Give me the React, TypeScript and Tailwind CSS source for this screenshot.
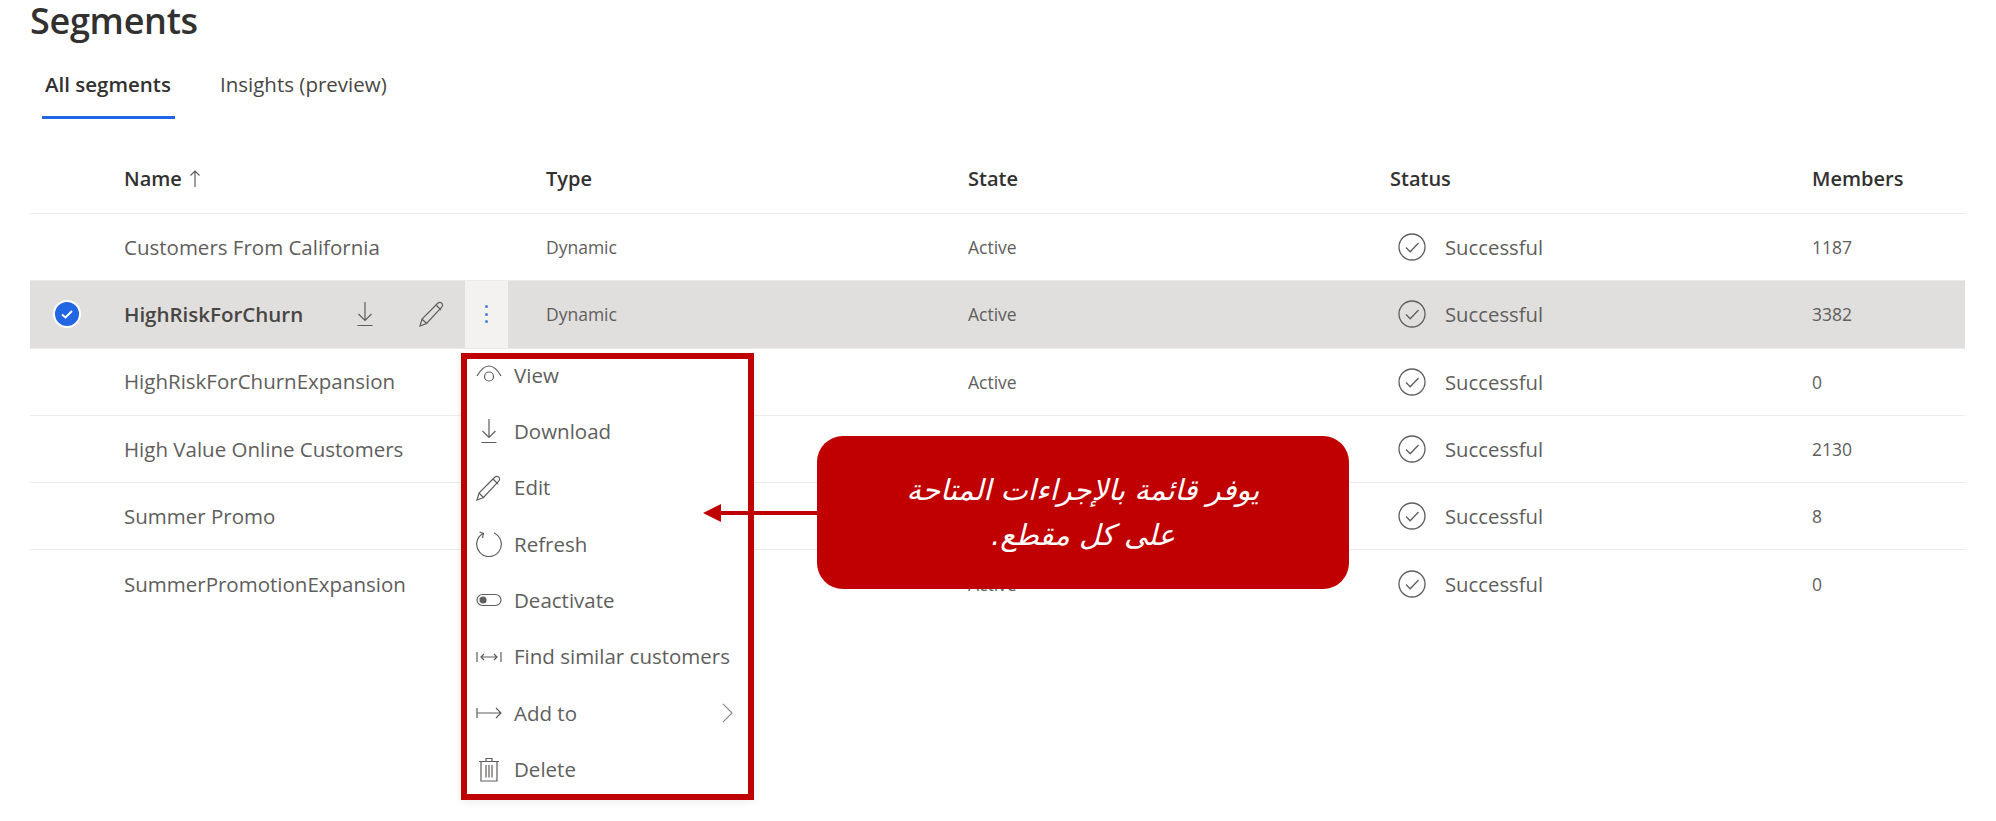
import { ReactNode } from 'react';

// type/state left empty where the menu and the callout sit on top of the cell
const rows = [
  { name: 'Customers From California', type: 'Dynamic', state: 'Active', members: '1187' },
  { name: 'HighRiskForChurn', type: 'Dynamic', state: 'Active', members: '3382', selected: true },
  { name: 'HighRiskForChurnExpansion', type: '', state: 'Active', members: '0' },
  { name: 'High Value Online Customers', type: '', state: '', members: '2130' },
  { name: 'Summer Promo', type: '', state: '', members: '8' },
  { name: 'SummerPromotionExpansion', type: '', state: 'Active', members: '0' },
];

function Icon({ children, className = 'w-[26px] h-[26px]' }: { children: ReactNode; className?: string }) {
  return (
    <svg viewBox="0 0 26 26" fill="none" stroke="#605e5c" strokeWidth="1.2" className={className}>
      {children}
    </svg>
  );
}

const DownloadIcon = () => (
  <Icon>
    <path d="M13 1v18M6.500 13l6.500 6.500 6.500-6.500M5.500 24.500h15" />
  </Icon>
);

const PencilIcon = () => (
  <Icon>
    <path d="M1 25l2-7L18.500 2.500c1.500-1.500 3-1.500 4.200-.3s1.200 2.800-.2 4.200L7.500 22.500zM3 18l5 5M17 4l5 5" />
  </Icon>
);

const CircleCheck = () => (
  <svg viewBox="0 0 28 28" fill="none" stroke="#605e5c" strokeWidth="1.3" className="h-[28px] w-[28px]">
    <circle cx="14" cy="14" r="13" />
    <path d="M8 14.500l4.200 4.200L20.500 10" />
  </svg>
);

const menuItems: { label: string; icon: ReactNode; chevron?: boolean }[] = [
  {
    label: 'View',
    icon: (
      <Icon>
        <path d="M1 14C5 7 9 4 13 4s8 3 12 10" />
        <circle cx="13" cy="14.500" r="4.500" />
      </Icon>
    ),
  },
  { label: 'Download', icon: <DownloadIcon /> },
  { label: 'Edit', icon: <PencilIcon /> },
  {
    label: 'Refresh',
    icon: (
      <Icon>
        <path d="M18 2A12.300 12.300 0 1 1 7 2.500M3.500 1L7.500 2.500 6.500 7" />
      </Icon>
    ),
  },
  {
    label: 'Deactivate',
    icon: (
      <Icon>
        <rect x="1" y="7.500" width="24" height="11" rx="5.500" />
        <circle cx="7" cy="13" r="3" fill="#605e5c" />
      </Icon>
    ),
  },
  {
    label: 'Find similar customers',
    icon: (
      <Icon>
        <path d="M1 8v10M25 8v10M5 13h16M8 10l-3 3 3 3M18 10l3 3-3 3" />
      </Icon>
    ),
  },
  {
    label: 'Add to',
    icon: (
      <Icon>
        <path d="M1 8v10M1 13h24M20 8l5 5-5 5" />
      </Icon>
    ),
    chevron: true,
  },
  {
    label: 'Delete',
    icon: (
      <Icon>
        <path d="M3 5.500h20M5 5.500V25h16V5.500M10 5.500V2.500h6v3M10 9v12.500M13 9v12.500M16 9v12.500" />
      </Icon>
    ),
  },
];

export default function App() {
  return (
    <div
      className="relative h-[821px] w-full overflow-hidden bg-white text-[#323130]"
      style={{ fontFamily: '"Open Sans", "Noto Sans", sans-serif' }}
    >
      <h1 className="ml-[30px] h-[42px] text-[36px] leading-[42px] font-semibold tracking-[-0.3px]">Segments</h1>

      {/* Tabs */}
      <div className="ml-[42px] flex h-[77px] items-start gap-[45px] pt-[25px] text-[20.500px] leading-[34px]">
        <div className="relative h-[52px] w-[133px] px-[3px] font-semibold whitespace-nowrap">
          All segments
          <div className="absolute right-0 bottom-0 left-0 h-[3px] bg-[#2266e3]" />
        </div>
        <div className="whitespace-nowrap text-[#484644]">Insights (preview)</div>
      </div>

      {/* Table */}
      <div className="mt-[26px] ml-[30px] w-[1935px]">
        <div className="grid h-[69px] grid-cols-[94px_422px_422px_422px_422px_153px] items-center border-b border-[#edebe9] text-[20px] font-semibold">
          <div />
          <div className="flex items-center gap-[7px]">
            Name
            <svg viewBox="0 0 12 18" fill="none" stroke="#605e5c" strokeWidth="1.200" className="h-[18px] w-[12px]">
              <path d="M6 17V1M1.500 5.500L6 1l4.500 4.500" />
            </svg>
          </div>
          <div>Type</div>
          <div>State</div>
          <div>Status</div>
          <div>Members</div>
        </div>

        {rows.map((row, i) => (
          <div
            key={row.name}
            className={`grid h-[67.300px] grid-cols-[94px_422px_422px_422px_422px_153px] items-center text-[17.500px] text-[#605e5c] ${
              i < rows.length - 1 ? 'border-b border-[#edebe9]' : ''
            } ${row.selected ? 'bg-[#e1dfdd]' : ''}`}
          >
            <div className="flex justify-start pl-[23px]">
              {row.selected && (
                <span className="flex h-[28px] w-[28px] items-center justify-center rounded-full border-2 border-white bg-[#2266e3]">
                  <svg viewBox="0 0 14 14" fill="none" stroke="white" strokeWidth="2" className="h-[14px] w-[14px]">
                    <path d="M2 7.500l3.500 3L12 4" />
                  </svg>
                </span>
              )}
            </div>
            {row.selected ? (
              <div className="flex h-full items-center">
                <span className="w-[219px] text-[20.500px] font-semibold text-[#484644]">{row.name}</span>
                <span className="flex w-[44px] justify-center"><DownloadIcon /></span>
                <span className="ml-[23px] flex w-[44px] justify-center"><PencilIcon /></span>
                <span className="ml-[11px] flex h-full w-[43px] flex-col items-center justify-center gap-[4.500px] bg-[#f3f2f1]">
                  <i className="h-[3px] w-[3px] rounded-full bg-[#4a7fd8]" />
                  <i className="h-[3px] w-[3px] rounded-full bg-[#4a7fd8]" />
                  <i className="h-[3px] w-[3px] rounded-full bg-[#4a7fd8]" />
                </span>
              </div>
            ) : (
              <div className="text-[20.500px]">{row.name}</div>
            )}
            <div>{row.type}</div>
            <div>{row.state}</div>
            <div className="flex items-center gap-[19px] pl-[8px] text-[20.300px]">
              <CircleCheck />
              Successful
            </div>
            <div>{row.members}</div>
          </div>
        ))}
      </div>

      {/* Context menu with annotation frame */}
      <div className="absolute top-[353px] left-[461px] h-[447px] w-[293px] border-[6px] border-[#c00000] bg-white shadow-[0_2px_8px_rgba(0,0,0,0.07)]">
        <div className="-mt-[12px] flex flex-col text-[20.500px] text-[#605e5c]">
          {menuItems.map((item) => (
            <div key={item.label} className="relative flex h-[56.300px] items-center gap-[12px] pl-[9px] whitespace-nowrap">
              {item.icon}
              {item.label}
              {item.chevron && (
                <svg viewBox="0 0 12 22" fill="none" stroke="#8a8886" strokeWidth="1.200" className="absolute right-[15px] h-[20px] w-[11px]">
                  <path d="M1 1l10 10L1 21" />
                </svg>
              )}
            </div>
          ))}
        </div>
      </div>

      {/* Callout and arrow */}
      <div className="absolute top-[504px] left-[703px] flex items-center">
        <svg viewBox="0 0 18 18" className="h-[18px] w-[18px]">
          <path d="M0 9L18 0v18z" fill="#c00000" />
        </svg>
        <div className="h-[4px] w-[100px] bg-[#c00000]" />
      </div>
      <div
        dir="rtl"
        className="absolute top-[436px] left-[817px] flex h-[153px] w-[532px] flex-col items-center justify-center rounded-[26px] bg-[#c00000] text-center text-[29px] leading-[45px] text-white italic"
        style={{ fontFamily: '"DejaVu Sans", sans-serif' }}
      >
        <div>يوفر قائمة بالإجراءات المتاحة</div>
        <div>على كل مقطع.</div>
      </div>
    </div>
  );
}
